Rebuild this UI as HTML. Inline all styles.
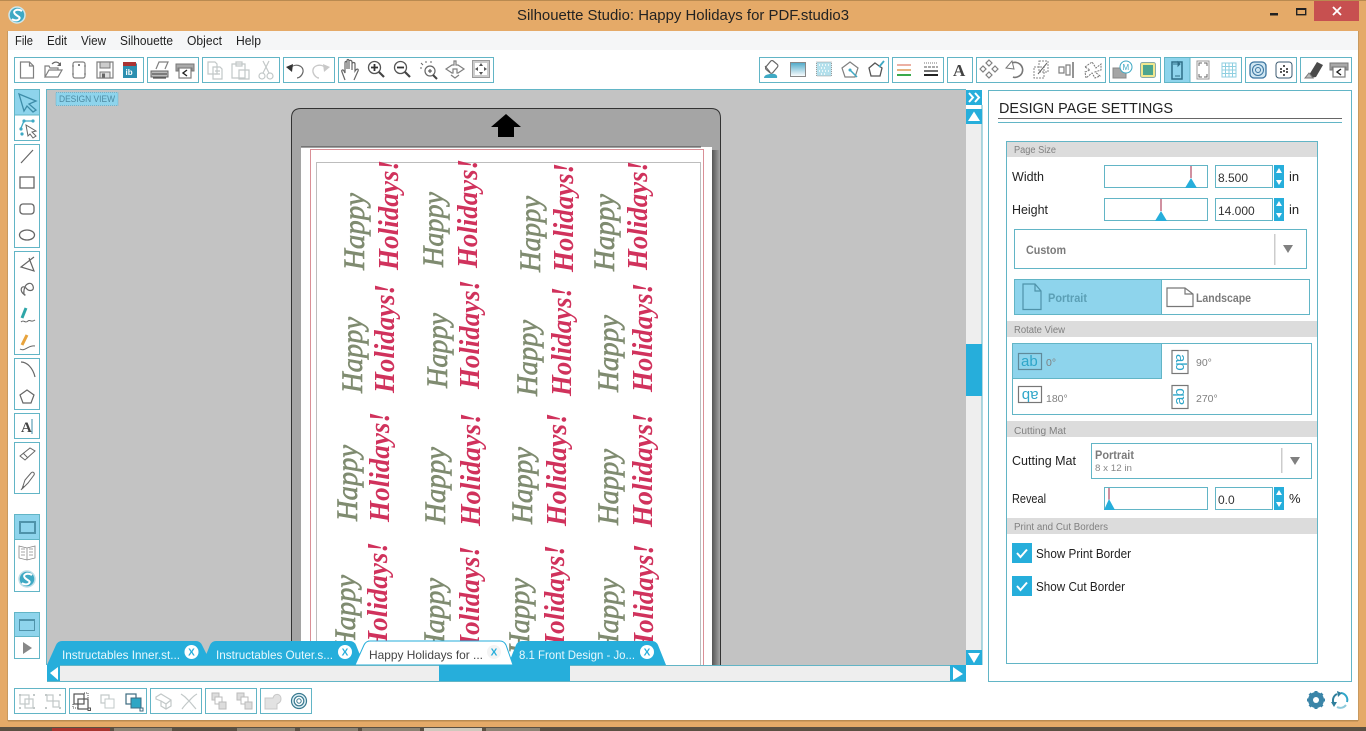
<!DOCTYPE html>
<html><head><meta charset="utf-8"><title>Silhouette Studio</title>
<style>
html,body{margin:0;padding:0;background:#e5aa68;overflow:hidden}
svg{display:block}
text{font-family:"Liberation Sans",sans-serif}
.tb{fill:#fff;stroke:#62b5c6;stroke-width:1}
.s{fill:none;stroke:#666;stroke-width:1.2}
.d{fill:none;stroke:#808080;stroke-width:1.2}
.g{fill:none;stroke:#c2c8c8;stroke-width:1.2}
.hd{fill:#dcdcdc}
.hl{font-size:10px;fill:#808080}
.lb{font-size:13px;fill:#222}
.gl{font-size:11.5px;fill:#7b7b7b;font-weight:bold}
.dg{font-size:10.5px;fill:#808080}
.hp{font-family:"Liberation Serif",serif;font-style:italic;font-size:30px;fill:#7f8b70;stroke:#7f8b70;stroke-width:.6}
.ho{font-family:"Liberation Serif",serif;font-style:italic;font-weight:bold;font-size:29px;fill:#d0325c}
.tt{font-size:12px;fill:#e8f8fd}
</style></head><body>
<svg xmlns="http://www.w3.org/2000/svg" width="1366" height="731" viewBox="0 0 1366 731">
<!-- window frame -->
<rect width="1366" height="731" fill="#e5aa68"/>
<rect x="0" y="0" width="1366" height="1" fill="#b98a50"/>
<rect x="8" y="31" width="1350" height="689" fill="#fff"/>
<rect x="8" y="31" width="1350" height="19" fill="#f5f6f7"/>
<rect x="8" y="720" width="1350" height="1.500" fill="#b98a50"/>
<rect x="7" y="31" width="1" height="690" fill="#c89a60"/>
<rect x="1358" y="31" width="1" height="690" fill="#c89a60"/>
<rect x="0" y="727" width="1366" height="4" fill="#5b5042"/>
<rect x="52" y="728" width="58" height="3" fill="#a8352f"/>
<rect x="114" y="728" width="58" height="3" fill="#8d8373"/>
<rect x="237" y="728" width="58" height="3" fill="#8d8373"/>
<rect x="300" y="728" width="58" height="3" fill="#8d8373"/>
<rect x="362" y="728" width="58" height="3" fill="#8d8373"/>
<rect x="424" y="728" width="58" height="3" fill="#cfc9bd"/>
<rect x="486" y="728" width="54" height="3" fill="#8d8373"/>
<!-- title -->
<circle cx="17" cy="15" r="8" fill="#3ea9c4" stroke="#cfe6ea" stroke-width="1.5"/>
<path d="M22,11C17,8 12,11 15,14S22,17 18,20C16,21 13,20 12,19" fill="none" stroke="#fff" stroke-width="2"/>
<text x="517" y="20" font-size="15" fill="#222" textLength="332" lengthAdjust="spacingAndGlyphs">Silhouette Studio: Happy Holidays for PDF.studio3</text>
<rect x="1270" y="13" width="8" height="2.5" fill="#222"/>
<rect x="1296.7" y="8.7" width="9" height="6" fill="none" stroke="#222" stroke-width="1.4"/><rect x="1296" y="8" width="10" height="2" fill="#222"/>
<rect x="1314" y="1" width="45" height="20" fill="#c75050"/>
<path d="M1333,7L1341,15M1341,7L1333,15" stroke="#fff" stroke-width="1.8"/>
<!-- menu -->
<g font-size="13" fill="#222">
<text x="15" y="45" textLength="18" lengthAdjust="spacingAndGlyphs">File</text>
<text x="47" y="45" textLength="20" lengthAdjust="spacingAndGlyphs">Edit</text>
<text x="81" y="45" textLength="25" lengthAdjust="spacingAndGlyphs">View</text>
<text x="120" y="45" textLength="53" lengthAdjust="spacingAndGlyphs">Silhouette</text>
<text x="187" y="45" textLength="35" lengthAdjust="spacingAndGlyphs">Object</text>
<text x="236" y="45" textLength="25" lengthAdjust="spacingAndGlyphs">Help</text>
</g>
<!-- top toolbar groups -->
<g>
<rect class="tb" x="14.5" y="57.5" width="129" height="25"/>
<rect class="tb" x="147.5" y="57.5" width="51" height="25"/>
<rect class="tb" x="202.5" y="57.5" width="77" height="25"/>
<rect class="tb" x="283.5" y="57.5" width="51" height="25"/>
<rect class="tb" x="338.5" y="57.5" width="155" height="25"/>
<rect class="tb" x="759.5" y="57.5" width="129" height="25"/>
<rect class="tb" x="892.5" y="57.5" width="51" height="25"/>
<rect class="tb" x="947.5" y="57.5" width="25" height="25"/>
<rect class="tb" x="976.5" y="57.5" width="129" height="25"/>
<rect class="tb" x="1109.5" y="57.5" width="51" height="25"/>
<rect class="tb" x="1164.5" y="57.5" width="77" height="25"/>
<rect class="tb" x="1245.5" y="57.5" width="51" height="25"/>
<rect class="tb" x="1300.5" y="57.5" width="51" height="25"/>
<rect x="1164.5" y="57.5" width="25.5" height="25" fill="#8ed4ec" stroke="#62b5c6"/>
</g>
<!-- toolbar icons left -->
<g transform="translate(27,70)"><path class="d" d="M-6.5,-8H2.5L6.5,-4V8H-6.5ZM2.5,-8V-4H6.5"/></g>
<g transform="translate(53,70)"><path class="d" d="M-8,7V-4H-4L-3,-2H5V0M-8,7H5L9,0H-4L-8,7Z"/><path d="M-1,-6C2,-9 5,-8 7,-6" fill="none" stroke="#666" stroke-width="1.2"/><path d="M8,-8V-4H4Z" fill="#666"/></g>
<g transform="translate(79,70)"><rect class="d" x="-6" y="-8" width="12" height="16" rx="2"/><path d="M-6,-3V-5M6,-3V-5M-6,3V5M6,3V5" stroke="#555"/><circle cx="0" cy="-5" r="1" fill="#555"/></g>
<g transform="translate(105,70)"><path class="d" d="M-8,-8H8V8H-8Z"/><rect x="-5" y="-8" width="10" height="6" fill="#ccc" stroke="#777"/><rect x="-5" y="2" width="10" height="6" fill="#ddd" stroke="#777"/><rect x="-3" y="3.500" width="3" height="4" fill="#666"/></g>
<g transform="translate(130,70)"><path d="M-7,-8H5L7,-6V8H-7Z" fill="#2c8fb0"/><rect x="-7" y="-8" width="13" height="4" fill="#a33"/><text x="-4.5" y="5" font-size="8" font-weight="bold" fill="#fff">ib</text></g>
<g transform="translate(160,70)"><path class="d" d="M-4,-1L-1,-8H8L5,-1"/><path d="M-9,1H8V7H-9Z" fill="#bbb" stroke="#666"/><path d="M-8,4H7M-7,8H6" stroke="#555" stroke-width="1.2"/></g>
<g transform="translate(185,70)"><path d="M-9,-6H9V1H7V-2H-7V1H-9Z" fill="#aaa" stroke="#777"/><path class="d" d="M-6,-2H6V8H-6Z"/><path d="M2,0L-2,3L2,6" stroke="#222" stroke-width="1.4" fill="none"/></g>
<g transform="translate(215,70)"><path class="g" d="M-7,-8H0L2,-6V4H-7ZM-2,-3H5L7,-1V9H-2Z"/><path class="g" d="M0,1H5M0,4H5"/></g>
<g transform="translate(240,70)"><path class="g" d="M-8,-6H5V8H-8ZM-4,-8H2V-4H-4ZM-1,0H9V9H-1Z"/></g>
<g transform="translate(266,70)"><path class="g" d="M-3,-9L3,3M3,-9L-3,3"/><circle class="g" cx="-4" cy="6" r="3"/><circle class="g" cx="4" cy="6" r="3"/></g>
<g transform="translate(295,70)"><path d="M-5,-2C0,-7 9,-5 8,2C7,6 4,8 2,8" fill="none" stroke="#666" stroke-width="1.2"/><path d="M-9,-3L-2,-6L-3,2Z" fill="#333"/></g>
<g transform="translate(321,70)"><path d="M5,-2C0,-7 -9,-5 -8,2C-7,6 -4,8 -2,8" fill="none" stroke="#c8c8c8" stroke-width="1.4"/><path d="M9,-3L2,-6L3,2Z" fill="#c8c8c8"/></g>
<g transform="translate(350,70)"><path class="s" d="M-5,10L-8,2C-9,0 -7,-1 -6,1L-5,3V-7C-5,-9 -3,-9 -3,-7V-1M-3,-1V-9C-3,-11 -1,-11 -1,-9V-1M-1,-1V-9C-1,-10 2,-10 2,-8V-1M2,0V-6C2,-8 5,-8 5,-6V1C7,-2 9,-1 8,1L4,10"/></g>
<g transform="translate(376,69)"><circle cx="-1.500" cy="-1.500" r="6" fill="#fff" stroke="#555" stroke-width="1.300"/><path d="M3,3L8,8" stroke="#444" stroke-width="2.200"/><path d="M-5,-1.500H2M-1.500,-5V2" stroke="#333" stroke-width="1.800"/></g>
<g transform="translate(402,69)"><circle cx="-1.500" cy="-1.500" r="6" fill="#fff" stroke="#555" stroke-width="1.300"/><path d="M3,3L8,8" stroke="#444" stroke-width="2.200"/><path d="M-5,-1.500H2" stroke="#333" stroke-width="1.800"/></g>
<g transform="translate(429,70)"><circle cx="1" cy="1" r="5" fill="none" stroke="#666" stroke-width="1.200"/><path d="M4,5L8,9" stroke="#444" stroke-width="2"/><path d="M-1,1H3M1,-1V3" stroke="#444"/><path d="M-8,-7L-6,-5M-3,-9V-7M-9,-2H-7M2,-9V-7" stroke="#666"/></g>
<g transform="translate(455,69)"><path class="d" d="M-9,0L-3,-4H-1V-8H1V-4H3L9,0L3,4H2V0H-2V4H-3Z"/><path class="d" d="M-4,6L0,9L4,6"/></g>
<g transform="translate(481,69)"><rect x="-8.500" y="-8.500" width="17" height="17" fill="#ccc" stroke="#999"/><rect x="-6" y="-6" width="12" height="12" fill="#fff"/><path d="M0,-6L-2,-3H2ZM0,6L-2,3H2ZM-6,0L-3,-2V2ZM6,0L3,-2V2Z" fill="#555"/></g>
<!-- toolbar icons right -->
<g transform="translate(771,69)"><rect x="-4" y="-8" width="9" height="11" rx="2" transform="rotate(40 0 -2)" fill="#fff" stroke="#666" stroke-width="1.200"/><path d="M-6,-3L-1,3" stroke="#666" stroke-width="1"/><path d="M-7,9C-7,6 -3,5 0,5C4,4 7,6 6,9Z" fill="#3ea9c4"/></g>
<g><defs><linearGradient id="gr" x1="0" y1="0" x2="0" y2="1"><stop offset="0" stop-color="#4ea9c8"/><stop offset="1" stop-color="#fff"/></linearGradient></defs><rect x="790.500" y="62.500" width="15" height="14" fill="url(#gr)" stroke="#888"/></g>
<g transform="translate(824,69)"><rect x="-7.500" y="-7" width="15" height="14" fill="#b4e0ec" stroke="#999" stroke-dasharray="1 1"/><path d="M-5,-4H5M-3,-1H3M-5,2H5M-3,5H3" stroke="#fff" stroke-dasharray="1 2" stroke-width="1.500"/></g>
<g transform="translate(850,70)"><path class="d" d="M0,-8L8,-2L5,7H-5L-8,-2Z"/><circle cx="0" cy="0" r="1.500" fill="#3ea9c4"/><path d="M0,0L7,7" stroke="#3ea9c4" stroke-width="1.500"/></g>
<g transform="translate(876,70)"><path d="M-1,-7L6,-2L4,6H-5L-7,-2Z" fill="none" stroke="#555" stroke-width="1.300"/><path d="M3,-3L8,-9" stroke="#3ea9c4" stroke-width="1.800"/></g>
<g transform="translate(904,70)"><path d="M-7,-5H7" stroke="#e79c8c" stroke-width="1.600"/><path d="M-7,0H7" stroke="#e0a060" stroke-width="1.600"/><path d="M-7,5H7" stroke="#3aa94b" stroke-width="2"/></g>
<g transform="translate(931,70)"><path d="M-7,-7H7" stroke="#777" stroke-dasharray="1 1"/><path d="M-7,-3H7" stroke="#555" stroke-dasharray="3 1"/><path d="M-7,1H7" stroke="#333" stroke-width="1.400"/><path d="M-7,5H7" stroke="#222" stroke-width="2"/></g>
<text x="953" y="76" font-size="17" font-weight="bold" fill="#444" style="font-family:'Liberation Serif',serif">A</text>
<g transform="translate(989,69)"><path class="d" d="M0,-9L3,-6L0,-3L-3,-6ZM0,9L3,6L0,3L-3,6ZM-9,0L-6,-3L-3,0L-6,3ZM9,0L6,-3L3,0L6,3Z"/></g>
<g transform="translate(1015,70)"><path d="M-5,-6C2,-11 10,-4 7,3C5,7 0,8 -2,7" fill="none" stroke="#777" stroke-width="1.600"/><path d="M-9,-2L-3,-9L-1,-1Z" fill="#fff" stroke="#777"/></g>
<g transform="translate(1041,70)"><rect x="-7" y="-3" width="10" height="11" fill="none" stroke="#888" stroke-dasharray="2 1"/><rect x="-2" y="-9" width="9" height="11" fill="none" stroke="#888" stroke-dasharray="2 1"/><path d="M-3,4L6,-7" stroke="#666"/></g>
<g transform="translate(1067,70)"><path d="M-8,-3H-3V3H-8ZM-1,-5H3V5H-1Z" class="d"/><path d="M6,-8V8" stroke="#666" stroke-width="1.400"/></g>
<g transform="translate(1093,70)"><path d="M-8,-3L-1,-8L3,-2L8,-6L8,0L2,2L7,6L2,8L-1,3L-7,8L-8,2L-3,0Z" fill="#fff" stroke="#777" stroke-dasharray="2 1"/></g>
<g transform="translate(1122,70)"><path d="M-9,-2H4V8H-9Z" fill="#a5a5a5" stroke="#888"/><circle cx="4" cy="-3" r="6" fill="#fff" stroke="#3ea9c4"/><text x="0.500" y="0" font-size="8" fill="#3ea9c4">M</text></g>
<g transform="translate(1148,70)"><rect x="-7.500" y="-7.500" width="15" height="15" rx="2" fill="#f1e88f" stroke="#8aa"/><rect x="-5" y="-5" width="10" height="10" fill="#4da58f"/></g>
<g transform="translate(1177,70)"><path d="M-5,-8H5V9H-5Z" fill="none" stroke="#2f6f88" stroke-width="1.500"/><path d="M-4,-6H3M3,-6L1,-8V-4ZM-2,6H3" stroke="#2f6f88"/></g>
<g transform="translate(1203,70)"><rect x="-6" y="-9" width="12" height="18" fill="#fff" stroke="#999"/><path d="M-4,-4V-7H-1M4,-4V-7H1M-4,4V7H-1M4,4V7H1" fill="none" stroke="#666"/></g>
<g transform="translate(1229,70)"><rect x="-7" y="-7" width="14" height="14" fill="none" stroke="#8fcfe0"/><path d="M-7,-3.500H7M-7,0H7M-7,3.500H7M-3.500,-7V7M0,-7V7M3.500,-7V7" stroke="#8fcfe0"/></g>
<g transform="translate(1258,70)"><rect x="-8" y="-8" width="16" height="16" rx="4" fill="#cfe6f2" stroke="#3b75a0" stroke-width="1.300"/><circle cx="0" cy="0" r="5.500" fill="none" stroke="#3b75a0"/><circle cx="0" cy="0" r="2.500" fill="none" stroke="#3b75a0"/></g>
<g transform="translate(1284,70)"><rect x="-8" y="-8" width="16" height="16" rx="3" fill="#fff" stroke="#3b5a70"/><g fill="#222"><circle cx="0" cy="-4" r="1"/><circle cx="-3" cy="-1" r="1"/><circle cx="3" cy="-1" r="1"/><circle cx="-3" cy="2" r="1"/><circle cx="3" cy="2" r="1"/><circle cx="0" cy="1" r="1"/><circle cx="0" cy="5" r="1"/></g></g>
<g transform="translate(1313,70)"><path d="M-4,5L4,-8L10,-5L3,7L-3,8Z" fill="#4a4a4a"/><path d="M-8,8L-4,3L0,8Z" fill="#bbb" stroke="#777"/></g>
<g transform="translate(1339,69)"><path d="M-9,-6H9V1H7V-2H-7V1H-9Z" fill="#aaa" stroke="#777"/><path class="d" d="M-6,-2H6V8H-6Z"/><path d="M2,0L-2,3L2,6" stroke="#222" stroke-width="1.400" fill="none"/></g>
<!-- left tool groups -->
<rect class="tb" x="14.500" y="89.500" width="25" height="51"/>
<rect x="14.500" y="89.500" width="25" height="25.500" fill="#8ed4ec" stroke="#62b5c6"/>
<rect class="tb" x="14.500" y="144.500" width="25" height="103"/>
<rect class="tb" x="14.500" y="251.500" width="25" height="103"/>
<rect class="tb" x="14.500" y="358.500" width="25" height="51"/>
<rect class="tb" x="14.500" y="413.500" width="25" height="25"/>
<rect class="tb" x="14.500" y="442.500" width="25" height="51"/>
<rect class="tb" x="14.500" y="514.500" width="25" height="77"/>
<rect x="14.500" y="514.500" width="25" height="25" fill="#8ed4ec" stroke="#62b5c6"/>
<rect class="tb" x="14.500" y="612.500" width="25" height="46"/>
<rect x="14.500" y="612.500" width="25" height="24" fill="#8ed4ec" stroke="#62b5c6"/>
<!-- left icons -->
<path d="M19,94L36,101L29,104L36,110L33,112L27,106L24,111Z" fill="none" stroke="#3d8ca8" stroke-width="1.300"/>
<path d="M21,128L24,121L33,121" fill="none" stroke="#3ea9c4" stroke-width="1.300"/><circle cx="21" cy="129" r="1.600" fill="#3ea9c4"/><circle cx="24" cy="121" r="1.600" fill="#3ea9c4"/><circle cx="33" cy="121" r="1.600" fill="#3ea9c4"/><circle cx="22" cy="134" r="1.600" fill="#3ea9c4"/>
<path d="M26,125L36,131L32,132L36,136L33,138L30,134L28,136Z" fill="#fff" stroke="#666"/>
<path d="M21,163L33,150" stroke="#666" stroke-width="1.200"/>
<rect x="20" y="177" width="14" height="11" fill="#fff" stroke="#666" stroke-width="1.300"/>
<rect x="20" y="204" width="14" height="10" rx="3" fill="#fff" stroke="#666" stroke-width="1.300"/>
<ellipse cx="27" cy="235" rx="7.500" ry="5" fill="#fff" stroke="#666" stroke-width="1.300"/>
<path d="M34,257L21,267L34,271L29,258" fill="none" stroke="#666" stroke-width="1.200"/>
<path d="M25,295C18,291 22,284 26,288C29,292 35,291 33,286C31,281 26,284 25,287C23,291 24,296 25,295Z" fill="none" stroke="#666" stroke-width="1.200"/>
<path d="M22,318L26,308" stroke="#2ea6a8" stroke-width="3"/><path d="M21,322C24,319 25,324 28,321C30,319 31,323 35,320" fill="none" stroke="#666"/>
<path d="M22,345L27,335" stroke="#e8a33c" stroke-width="3"/><path d="M20,349C25,352 28,345 35,346" fill="none" stroke="#666"/>
<path d="M21,362C27,362 33,368 35,377" fill="none" stroke="#666" stroke-width="1.200"/>
<path d="M27,390L34,395L31,403H23L20,395Z" fill="none" stroke="#666" stroke-width="1.200"/>
<text x="21" y="432" font-size="15" font-weight="bold" fill="#444" style="font-family:'Liberation Serif',serif">A</text><path d="M32,419V434" stroke="#3d8ca8"/>
<path d="M20,456L30,448L35,451L25,460Z" fill="#fff" stroke="#666"/><path d="M23,453L28,458" stroke="#666"/>
<path d="M22,489L25,480L31,473C33,471 35,473 34,475L28,483Z" fill="#fff" stroke="#666"/><path d="M21,490L24,486" stroke="#666"/>
<rect x="20" y="522" width="15" height="11" fill="#8ed4ec" stroke="#4f93aa" stroke-width="2"/>
<path d="M19,546L27,548L35,546V558L27,560L19,558ZM27,548V560M21,549H25M21,552H25M21,555H25M29,549H33M29,552H33M29,555H33" fill="#fff" stroke="#888" stroke-width=".8"/>
<circle cx="27" cy="579" r="8" fill="#3ea9c4" stroke="#bfdfe8" stroke-width="1.500"/><path d="M32,575C27,572 22,575 25,578S32,581 28,584C26,585 23,584 22,583" fill="none" stroke="#fff" stroke-width="2"/>
<rect x="19.500" y="619.500" width="15" height="11" fill="#8ed4ec" stroke="#4f93aa"/><rect x="19" y="619" width="16" height="2" fill="#4f93aa"/>
<path d="M23,642L32,648L23,654Z" fill="#888"/>

<!-- canvas -->
<rect x="46" y="89" width="920" height="576" fill="#c3c3c3"/>
<rect x="46" y="89" width="920" height="1" fill="#62b5c6"/>
<rect x="46" y="89" width="1" height="576" fill="#62b5c6"/>
<rect x="56" y="92.500" width="62" height="13" fill="#8ed4ec" stroke="#6fb3cc" stroke-dasharray="1 1"/>
<text x="59" y="102" font-size="9" fill="#4e8ba3" textLength="56" lengthAdjust="spacingAndGlyphs">DESIGN VIEW</text>
<!-- mat -->
<path d="M291.500,665V118Q291.500,108.500 301,108.500H711Q720.500,108.500 720.500,118V665Z" fill="#a5a5a5" stroke="#333"/>
<defs><linearGradient id="sh" x1="0" x2="1" y1="0" y2="0"><stop offset="0" stop-color="#555"/><stop offset="1" stop-color="#a5a5a5"/></linearGradient></defs>
<rect x="712" y="150" width="8" height="515" fill="url(#sh)"/>
<rect x="301" y="147" width="411" height="518" fill="#fff"/>
<rect x="301" y="146.500" width="400" height="1" fill="#444"/>
<path d="M310.500,665V149.500H703.500V665" fill="none" stroke="#d98f96"/>
<path d="M316.500,665V162.500H700.500V665" fill="none" stroke="#bdbdbd"/>
<path d="M506,114L521,127H514V137H498V127H491Z" fill="#000"/>
<!-- canvas texts -->
<g>
<text class="hp" textLength="77" lengthAdjust="spacingAndGlyphs" transform="translate(364,270) rotate(-90)">Happy</text>
<text class="ho" textLength="110" lengthAdjust="spacingAndGlyphs" transform="translate(398,270) rotate(-90)">Holidays!</text>
<text class="hp" textLength="75" lengthAdjust="spacingAndGlyphs" transform="translate(443,267) rotate(-90)">Happy</text>
<text class="ho" textLength="109" lengthAdjust="spacingAndGlyphs" transform="translate(477,268) rotate(-90)">Holidays!</text>
<text class="hp" textLength="76" lengthAdjust="spacingAndGlyphs" transform="translate(540,272) rotate(-90)">Happy</text>
<text class="ho" textLength="109" lengthAdjust="spacingAndGlyphs" transform="translate(573,272) rotate(-90)">Holidays!</text>
<text class="hp" textLength="77" lengthAdjust="spacingAndGlyphs" transform="translate(614,271) rotate(-90)">Happy</text>
<text class="ho" textLength="109" lengthAdjust="spacingAndGlyphs" transform="translate(647,270) rotate(-90)">Holidays!</text>

<text class="hp" textLength="76" lengthAdjust="spacingAndGlyphs" transform="translate(362,393) rotate(-90)">Happy</text>
<text class="ho" textLength="109" lengthAdjust="spacingAndGlyphs" transform="translate(394,393) rotate(-90)">Holidays!</text>
<text class="hp" textLength="75" lengthAdjust="spacingAndGlyphs" transform="translate(447,388) rotate(-90)">Happy</text>
<text class="ho" textLength="109" lengthAdjust="spacingAndGlyphs" transform="translate(479,389) rotate(-90)">Holidays!</text>
<text class="hp" textLength="76" lengthAdjust="spacingAndGlyphs" transform="translate(537,396) rotate(-90)">Happy</text>
<text class="ho" textLength="109" lengthAdjust="spacingAndGlyphs" transform="translate(571,396) rotate(-90)">Holidays!</text>
<text class="hp" textLength="77" lengthAdjust="spacingAndGlyphs" transform="translate(618,392) rotate(-90)">Happy</text>
<text class="ho" textLength="109" lengthAdjust="spacingAndGlyphs" transform="translate(652,392) rotate(-90)">Holidays!</text>

<text class="hp" textLength="76" lengthAdjust="spacingAndGlyphs" transform="translate(357,521) rotate(-90)">Happy</text>
<text class="ho" textLength="110" lengthAdjust="spacingAndGlyphs" transform="translate(389,522) rotate(-90)">Holidays!</text>
<text class="hp" textLength="77" lengthAdjust="spacingAndGlyphs" transform="translate(445,524) rotate(-90)">Happy</text>
<text class="ho" textLength="113" lengthAdjust="spacingAndGlyphs" transform="translate(480,526) rotate(-90)">Holidays!</text>
<text class="hp" textLength="77" lengthAdjust="spacingAndGlyphs" transform="translate(532,524) rotate(-90)">Happy</text>
<text class="ho" textLength="113" lengthAdjust="spacingAndGlyphs" transform="translate(566,526) rotate(-90)">Holidays!</text>
<text class="hp" textLength="76" lengthAdjust="spacingAndGlyphs" transform="translate(618,525) rotate(-90)">Happy</text>
<text class="ho" textLength="114" lengthAdjust="spacingAndGlyphs" transform="translate(652,527) rotate(-90)">Holidays!</text>

<text class="hp" textLength="76" lengthAdjust="spacingAndGlyphs" transform="translate(355,651) rotate(-90)">Happy</text>
<text class="ho" textLength="110" lengthAdjust="spacingAndGlyphs" transform="translate(387,652) rotate(-90)">Holidays!</text>
<text class="hp" textLength="76" lengthAdjust="spacingAndGlyphs" transform="translate(444,654) rotate(-90)">Happy</text>
<text class="ho" textLength="110" lengthAdjust="spacingAndGlyphs" transform="translate(479,656) rotate(-90)">Holidays!</text>
<text class="hp" textLength="76" lengthAdjust="spacingAndGlyphs" transform="translate(529,654) rotate(-90)">Happy</text>
<text class="ho" textLength="110" lengthAdjust="spacingAndGlyphs" transform="translate(564,655) rotate(-90)">Holidays!</text>
<text class="hp" textLength="76" lengthAdjust="spacingAndGlyphs" transform="translate(618,654) rotate(-90)">Happy</text>
<text class="ho" textLength="110" lengthAdjust="spacingAndGlyphs" transform="translate(653,654) rotate(-90)">Holidays!</text>
</g>
<!-- tabs -->
<path d="M47,665L56,645Q58,641 62,641H196Q200,641 202,645L212,665Z" fill="#26aedb"/>
<path d="M202,665L210,645Q212,641 216,641H350Q354,641 356,645L364,665Z" fill="#26aedb"/>
<path d="M508,665L516,645Q518,641 522,641H652Q656,641 658,645L666,665Z" fill="#26aedb"/>
<path d="M355,665L364,645Q366,641 370,641H500Q504,641 506,645L513,665Z" fill="#fff" stroke="#26aedb"/>
<text class="tt" x="62" y="659" textLength="118" lengthAdjust="spacingAndGlyphs">Instructables Inner.st...</text>
<text class="tt" x="216" y="659" textLength="117" lengthAdjust="spacingAndGlyphs">Instructables Outer.s...</text>
<text x="369" y="659" font-size="12" fill="#444" textLength="114" lengthAdjust="spacingAndGlyphs">Happy Holidays for ...</text>
<text class="tt" x="519" y="659" textLength="116" lengthAdjust="spacingAndGlyphs">8.1 Front Design - Jo...</text>
<g font-size="10" font-weight="bold" fill="#26aedb" text-anchor="middle">
<circle cx="191.500" cy="652" r="7" fill="#fff"/><text x="191.500" y="655.500">X</text>
<circle cx="345" cy="652" r="7" fill="#fff"/><text x="345" y="655.500">X</text>
<circle cx="494" cy="652" r="7" fill="#f4f4f4"/><text x="494" y="655.500">X</text>
<circle cx="647" cy="652" r="7" fill="#fff"/><text x="647" y="655.500">X</text>
</g>
<!-- h scrollbar -->
<rect x="47" y="665" width="919" height="1" fill="#62b5c6"/>
<rect x="60" y="666" width="890" height="15" fill="#eeeeee"/>
<rect x="439" y="665" width="131" height="16" fill="#26aedb"/>
<rect x="47" y="665" width="13" height="17" fill="#26aedb"/>
<path d="M50,673L58,667V680Z" fill="#fff"/>
<rect x="950" y="665" width="16" height="17" fill="#26aedb"/>
<path d="M953,667L963,674L953,680Z" fill="#fff"/>
<rect x="47" y="681" width="919" height="1" fill="#62b5c6"/>
<!-- v scrollbar -->
<rect x="966" y="105" width="16" height="560" fill="#eeeeee"/>
<rect x="966" y="105" width="16" height="4" fill="#fff"/>
<rect x="981.500" y="105" width="1" height="560" fill="#62b5c6"/>
<rect x="966" y="90" width="16" height="15" fill="#26aedb"/>
<path d="M969,93L973,97.500L969,102M975,93L979,97.500L975,102" fill="none" stroke="#fff" stroke-width="2"/>
<rect x="966" y="109" width="16" height="15" fill="#26aedb"/>
<path d="M974,111.500L980,121H968Z" fill="#fff"/>
<rect x="966" y="344" width="16" height="52" fill="#26aedb"/>
<rect x="966" y="650" width="16" height="15" fill="#26aedb"/>
<path d="M968,653H980L974,663Z" fill="#fff"/>
<!-- right panel -->
<rect class="tb" x="988.500" y="90.500" width="363" height="591"/>
<text x="999" y="113" font-size="15" fill="#222" textLength="174" lengthAdjust="spacingAndGlyphs">DESIGN PAGE SETTINGS</text>
<rect x="998" y="118" width="344" height="1" fill="#666"/>
<rect x="998" y="122" width="344" height="1" fill="#62b5c6"/>
<rect class="tb" x="1006.500" y="141.500" width="311" height="522"/>
<rect class="hd" x="1007" y="142" width="310" height="15"/>
<text class="hl" x="1014" y="153" textLength="42" lengthAdjust="spacingAndGlyphs">Page Size</text>
<text class="lb" x="1012" y="181" textLength="32" lengthAdjust="spacingAndGlyphs">Width</text>
<rect class="tb" x="1104.500" y="165.500" width="103" height="22"/>
<path d="M1191,166V178" stroke="#a02040"/><path d="M1191,178L1197,188H1185Z" fill="#26aedb"/>
<rect class="tb" x="1215.500" y="165.500" width="57" height="22"/>
<text x="1218" y="182" font-size="12" fill="#333">8.500</text>
<rect x="1274" y="165" width="10" height="23" fill="#26aedb"/>
<path d="M1279,168L1282,173H1276ZM1279,185L1282,180H1276Z" fill="#fff"/>
<text class="lb" x="1289" y="181">in</text>
<text class="lb" x="1012" y="214" textLength="36" lengthAdjust="spacingAndGlyphs">Height</text>
<rect class="tb" x="1104.500" y="198.500" width="103" height="22"/>
<path d="M1161,199V211" stroke="#a02040"/><path d="M1161,211L1167,221H1155Z" fill="#26aedb"/>
<rect class="tb" x="1215.500" y="198.500" width="57" height="22"/>
<text x="1218" y="215" font-size="12" fill="#333">14.000</text>
<rect x="1274" y="198" width="10" height="23" fill="#26aedb"/>
<path d="M1279,201L1282,206H1276ZM1279,218L1282,213H1276Z" fill="#fff"/>
<text class="lb" x="1289" y="214">in</text>
<rect class="tb" x="1014.500" y="229.500" width="292" height="39"/>
<text class="gl" x="1026" y="254" textLength="40" lengthAdjust="spacingAndGlyphs">Custom</text>
<rect x="1274" y="234" width="1.500" height="31" fill="#ccc"/>
<path d="M1283,245H1293L1288,253Z" fill="#808080"/>
<!-- orientation -->
<rect class="tb" x="1014.500" y="279.500" width="295" height="35"/>
<rect x="1014.500" y="279.500" width="147" height="35" fill="#8ed4ec" stroke="#62b5c6"/>
<path d="M1023,284H1035L1041,291V309.500H1023ZM1035,284V291H1041" fill="none" stroke="#4f93aa" stroke-width="1.200"/>
<text x="1048" y="302" font-size="11.500" font-weight="bold" fill="#5b9fb5" textLength="39" lengthAdjust="spacingAndGlyphs">Portrait</text>
<path d="M1167,288H1185L1193,294V306.500H1167ZM1185,288V294H1193" fill="none" stroke="#777" stroke-width="1.200"/>
<text class="gl" x="1196" y="302" textLength="55" lengthAdjust="spacingAndGlyphs">Landscape</text>
<!-- rotate -->
<rect class="hd" x="1007" y="321" width="310" height="16"/>
<text class="hl" x="1014" y="333" textLength="51" lengthAdjust="spacingAndGlyphs">Rotate View</text>
<rect class="tb" x="1012.500" y="343.500" width="299" height="71"/>
<rect x="1012.500" y="343.500" width="149" height="35" fill="#8ed4ec" stroke="#62b5c6"/>
<rect x="1018.500" y="353.500" width="23" height="16" fill="#8ed4ec" stroke="#5f8a9a" stroke-width="1.200"/>
<text x="1021" y="366" font-size="15" fill="#2fa6c9">ab</text>
<text class="dg" x="1046" y="366">0°</text>
<g transform="translate(1180,362)"><rect x="-8" y="-11.500" width="16" height="23" fill="#fff" stroke="#777" stroke-width="1.200"/><text transform="rotate(90) translate(-8,4)" font-size="15" fill="#2fa6c9">ab</text></g>
<text class="dg" x="1196" y="366">90°</text>
<rect x="1018.500" y="386.500" width="23" height="16" fill="#fff" stroke="#777" stroke-width="1.200"/>
<text transform="translate(1038.500,391) rotate(180)" font-size="15" fill="#2fa6c9">ab</text>
<text class="dg" x="1046" y="402">180°</text>
<g transform="translate(1180,397)"><rect x="-8" y="-11.500" width="16" height="23" fill="#fff" stroke="#777" stroke-width="1.200"/><text transform="rotate(-90) translate(-8,4)" font-size="15" fill="#2fa6c9">ab</text></g>
<text class="dg" x="1196" y="402">270°</text>
<!-- mat -->
<rect class="hd" x="1007" y="421" width="310" height="16"/>
<text class="hl" x="1014" y="434" textLength="52" lengthAdjust="spacingAndGlyphs">Cutting Mat</text>
<text class="lb" x="1012" y="465" textLength="64" lengthAdjust="spacingAndGlyphs">Cutting Mat</text>
<rect class="tb" x="1091.500" y="443.500" width="220" height="35"/>
<text class="gl" x="1095" y="459" textLength="39" lengthAdjust="spacingAndGlyphs">Portrait</text>
<text x="1095" y="471" font-size="9.500" fill="#888" textLength="37" lengthAdjust="spacingAndGlyphs">8 x 12 in</text>
<rect x="1281" y="448" width="1.500" height="25" fill="#ccc"/>
<path d="M1290,457H1300L1295,465Z" fill="#808080"/>
<text class="lb" x="1012" y="503" textLength="34" lengthAdjust="spacingAndGlyphs">Reveal</text>
<rect class="tb" x="1104.500" y="487.500" width="103" height="22"/>
<path d="M1109,488V500" stroke="#a02040"/><path d="M1109,499L1115,510H1104Z" fill="#26aedb"/>
<rect class="tb" x="1215.500" y="487.500" width="57" height="22"/>
<text x="1218" y="504" font-size="12" fill="#333">0.0</text>
<rect x="1274" y="487" width="10" height="23" fill="#26aedb"/>
<path d="M1279,490L1282,495H1276ZM1279,507L1282,502H1276Z" fill="#fff"/>
<text class="lb" x="1289" y="503" font-size="12">%</text>
<!-- borders -->
<rect class="hd" x="1007" y="518" width="310" height="16"/>
<text class="hl" x="1014" y="530" textLength="94" lengthAdjust="spacingAndGlyphs">Print and Cut Borders</text>
<rect x="1012" y="543" width="20" height="20" fill="#26aedb"/>
<path d="M1017,553L1020.500,557L1027,549.500" fill="none" stroke="#fff" stroke-width="2"/>
<text class="lb" x="1036" y="558" textLength="95" lengthAdjust="spacingAndGlyphs">Show Print Border</text>
<rect x="1012" y="576" width="20" height="20" fill="#26aedb"/>
<path d="M1017,586L1020.500,590L1027,582.500" fill="none" stroke="#fff" stroke-width="2"/>
<text class="lb" x="1036" y="591" textLength="89" lengthAdjust="spacingAndGlyphs">Show Cut Border</text>
<!-- bottom toolbar -->
<rect class="tb" x="14.500" y="688.500" width="51" height="25"/>
<rect class="tb" x="69.500" y="688.500" width="77" height="25"/>
<rect class="tb" x="150.500" y="688.500" width="51" height="25"/>
<rect class="tb" x="205.500" y="688.500" width="51" height="25"/>
<rect class="tb" x="260.500" y="688.500" width="51" height="25"/>
<g transform="translate(27,701)"><rect class="g" x="-7" y="-6" width="9" height="9"/><rect class="g" x="-2" y="-2" width="8" height="9"/><path d="M-8,-7h2v2h-2zM6,-7h2v2h-2zM-8,6h2v2h-2zM6,6h2v2h-2z" fill="#c2c8c8"/></g>
<g transform="translate(53,701)"><rect class="g" x="-6" y="-6" width="6" height="6"/><rect class="g" x="0" y="0" width="6" height="6"/><path d="M-8,-7h2v2h-2zM6,-7h2v2h-2zM-8,6h2v2h-2zM6,6h2v2h-2z" fill="#c2c8c8"/></g>
<g transform="translate(81,701)"><rect x="-7" y="-7" width="10" height="10" fill="none" stroke="#555" stroke-width="1.200"/><rect x="-3" y="-2" width="10" height="10" fill="none" stroke="#555" stroke-width="1.200"/><path d="M-8,3V7H-3M3,-8H7V-3" fill="none" stroke="#555" stroke-dasharray="1 1"/><rect x="7" y="7" width="2.500" height="2.500" fill="#fff" stroke="#555"/></g>
<g transform="translate(107,701)"><rect class="g" x="-6" y="-6" width="8" height="8"/><rect x="-2" y="-2" width="9" height="9" fill="#fff" stroke="#c2c8c8"/></g>
<g transform="translate(134,701)"><rect x="-8" y="-7" width="10" height="10" fill="#fff" stroke="#3d6b80" stroke-width="1.200"/><rect x="-3" y="-3" width="10" height="10" fill="#2ea6c4" stroke="#3d6b80"/><rect x="6" y="7" width="3" height="3" fill="#fff" stroke="#3d6b80"/></g>
<g transform="translate(163,701)"><path class="g" d="M-7,-4L-2,-7L3,-4L8,-1V5L3,8L-2,5V0L-7,-2ZM-2,0L3,3V8M3,3L8,-1"/></g>
<g transform="translate(189,701)"><path class="g" d="M-8,-7C-3,-4 -1,-1 0,0C2,-2 4,-5 8,-7M0,0C-3,3 -5,5 -7,8M0,0C3,3 5,6 7,8"/></g>
<g transform="translate(218,701)"><rect x="-6" y="-8" width="7" height="7" fill="#ddd" stroke="#bbb"/><rect x="-3" y="-4" width="7" height="7" fill="#fff" stroke="#bbb"/><rect x="1" y="1" width="7" height="7" fill="#ddd" stroke="#bbb"/></g>
<g transform="translate(244,701)"><rect x="-7" y="-8" width="7" height="7" fill="#ddd" stroke="#bbb"/><rect x="-3" y="-4" width="7" height="7" fill="#fff" stroke="#bbb"/><rect x="1" y="1" width="7" height="7" fill="#ddd" stroke="#bbb"/></g>
<g transform="translate(273,701)"><path d="M-8,-3H0C1,-8 8,-8 8,-2C8,1 6,2 4,3V8H-8Z" fill="#e2e2e2" stroke="#c8c8c8"/></g>
<g transform="translate(299,701)"><circle r="7.500" fill="#dff1f7" stroke="#3a7a90" stroke-width="1.200"/><circle r="4.800" fill="#fff" stroke="#3a7a90" stroke-width="1.200"/><circle r="2.200" fill="#fff" stroke="#3a7a90"/></g>
<!-- settings / refresh -->
<g transform="translate(1316,700)"><circle r="6" fill="none" stroke="#3b85a8" stroke-width="4"/><path d="M0,-9V9M-9,0H9M-6.400,-6.400L6.400,6.400M6.400,-6.400L-6.400,6.400" stroke="#3b85a8" stroke-width="3"/><circle r="3" fill="#fff"/></g>
<g transform="translate(1340,700)"><path d="M-6,4A7,7 0 0 1 -3,-6" fill="none" stroke="#2f7f9c" stroke-width="2"/><path d="M1,-7A7,7 0 0 1 7,2" fill="none" stroke="#2fa6c9" stroke-width="2"/><path d="M6,5A7,7 0 0 1 -3,7" fill="none" stroke="#8ecadb" stroke-width="2"/><path d="M-3,-9L2,-7L-2,-3Z" fill="#2f7f9c"/><path d="M-9,2L-3,2L-6,7Z" fill="#2f7f9c"/></g>
</svg>
</body></html>
